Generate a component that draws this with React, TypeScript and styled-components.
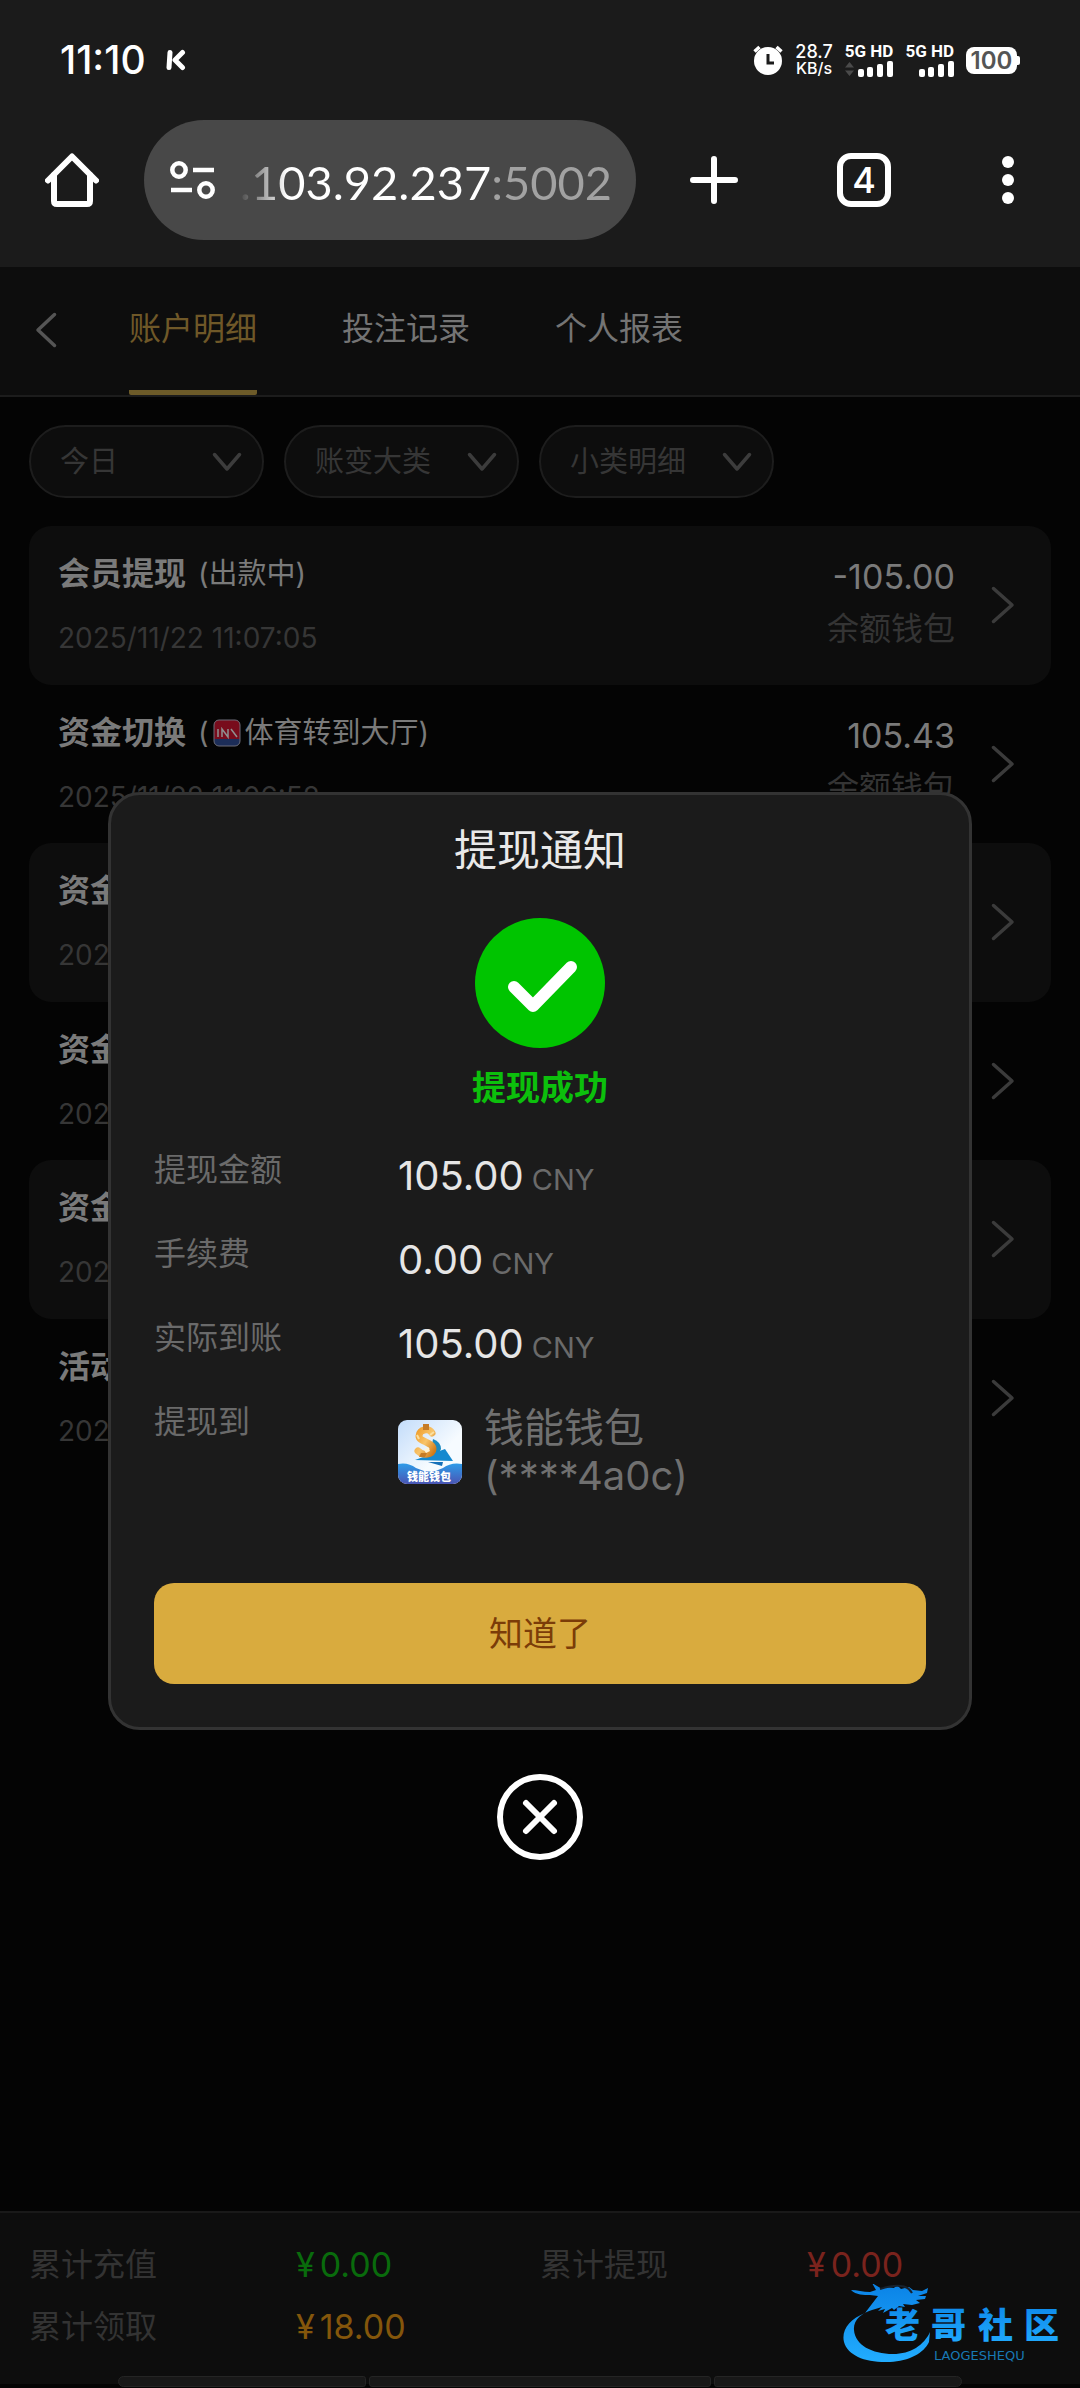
import React from "react";
import styled, { createGlobalStyle } from "styled-components";

const GlobalStyle = createGlobalStyle`
  *, *::before, *::after { box-sizing: border-box; }
  body {
    margin: 0;
    background: #040404;
    font-family: Inter, "Noto Sans CJK SC", sans-serif;
  }
  button, input, select { font: inherit; color: inherit; border: 0; padding: 0; margin: 0; background: none; outline: none; }
  ul, dl, dd, h2, p { margin: 0; padding: 0; }
  ul { list-style: none; }
  svg { display: block; flex: none; }
`;

const Screen = styled.div`
  display: flex;
  flex-direction: column;
  min-height: 100vh;
`;

/* ---------- browser chrome ---------- */

const Chrome = styled.header`
  background: #1b1b1b;
  padding-bottom: 27px;
`;

const StatusBar = styled.div`
  display: flex;
  align-items: center;
  justify-content: space-between;
  height: 120px;
  padding: 0 60px;
  color: #fff;
`;

const StatusGroup = styled.div<{ $gap: number }>`
  display: flex;
  align-items: center;
  gap: ${(p) => p.$gap}px;
`;

const Clock = styled.span`
  font-size: 39px;
  font-weight: 500;
  line-height: 40px;
`;

const NetSpeed = styled.div`
  display: flex;
  flex-direction: column;
  align-items: center;
  font-size: 18px;
  font-weight: 500;
  line-height: 16px;
  small { font-size: 16px; }
`;

const Sim = styled.div`
  display: flex;
  flex-direction: column;
  align-items: flex-end;
  gap: 2px;
  font: 700 17px/16px Roboto, sans-serif;
`;

const Battery = styled.div`
  display: flex;
  align-items: center;
`;

const BatteryBody = styled.span`
  width: 51px;
  border-radius: 8px;
  background: #fff;
  color: #555;
  font-size: 24px;
  font-weight: 600;
  line-height: 27px;
  text-align: center;
`;

const BatteryNub = styled.span`
  width: 3px;
  height: 9px;
  border-radius: 0 2px 2px 0;
  background: #fff;
`;

const Toolbar = styled.div`
  display: flex;
  align-items: center;
  padding-left: 45px;
  color: #fff;
`;

const AddressBar = styled.label`
  display: flex;
  flex: 1;
  min-width: 0;
  align-items: center;
  height: 120px;
  margin-left: 45px;
  padding: 0 24px 0 26px;
  border-radius: 60px;
  background: #484848;
`;

const Address = styled.input`
  flex: 1;
  min-width: 0;
  height: 64px;
  padding-top: 4px;
  font-family: Lato, sans-serif;
  font-size: 47px;
  line-height: 60px;
  text-align: right;
  color: transparent;
  background: linear-gradient(90deg, transparent 24px, #fff 72px, #fff 276px, #a2a2a2 276px);
  background-clip: text;
  -webkit-background-clip: text;
`;

const ToolButton = styled.button<{ $width: number }>`
  display: flex;
  align-items: center;
  justify-content: center;
  width: ${(p) => p.$width}px;
  height: 120px;
`;

const TabCount = styled.span`
  width: 54px;
  border: 6px solid #fff;
  border-radius: 14px;
  font-size: 36px;
  font-weight: 500;
  line-height: 42px;
  text-align: center;
`;

/* ---------- page behind the dialog ---------- */

const Page = styled.main`
  position: relative;
  display: flex;
  flex: 1;
  flex-direction: column;
`;

const TabBar = styled.nav`
  display: flex;
  height: 130px;
  padding-left: 29px;
  border-bottom: 2px solid #1c1c1c;
  background: #0d0d0d;
`;

const BackButton = styled.button`
  display: flex;
  align-items: center;
  width: 100px;
  padding: 0 6px 2px;
  color: #555;
`;

const Tabs = styled.div`
  display: flex;
  gap: 85px;
`;

const Tab = styled.a<{ $active?: boolean }>`
  padding-top: 38px;
  border-bottom: 5px solid ${(p) => (p.$active ? "#6d5b29" : "transparent")};
  border-radius: 2px;
  color: ${(p) => (p.$active ? "#6f5828" : "#747474")};
  font-size: 32px;
  line-height: 48px;
  text-decoration: none;
`;

const Filters = styled.div`
  display: flex;
  gap: 20px;
  padding: 28px 29px;
`;

const Filter = styled.label`
  display: flex;
  align-items: center;
  width: 235px;
  height: 73px;
  padding-right: 20px;
  border: 2px solid #1d1d1d;
  border-radius: 37px;
  background: #0d0d0d;
  color: #3c3c3c;
`;

const FilterSelect = styled.select`
  flex: 1;
  min-width: 0;
  height: 48px;
  padding-left: 29px;
  appearance: none;
  color: #363636;
  font-size: 29px;
  line-height: 44px;
`;

const Records = styled.ul`
  padding: 0 29px;
`;

const RecordItem = styled.li`
  border-radius: 22px;
  &:nth-child(odd) {
    padding-bottom: 1px;
    background: #0d0d0d;
  }
`;

const RecordButton = styled.button`
  display: flex;
  align-items: center;
  width: 100%;
  height: 158px;
  padding: 0 36px 0 29px;
  color: #3b3b3b;
  text-align: left;
`;

const RecordMain = styled.span`
  display: flex;
  flex: 1;
  flex-direction: column;
  gap: 16px;
  padding-top: 2px;
`;

const RecordTitle = styled.span`
  display: flex;
  align-items: center;
  gap: 12px;
  color: #7a7a7a;
  font-size: 32px;
  line-height: 48px;
`;

const RecordNote = styled.span`
  display: flex;
  align-items: center;
  font-size: 29px;
  svg { margin: 0 4px; }
`;

const RecordDate = styled.span`
  color: #363636;
  font-size: 28px;
  line-height: 48px;
`;

const RecordSide = styled.span`
  display: flex;
  flex-direction: column;
  gap: 4px;
  margin-right: 36px;
  padding-bottom: 5px;
  color: #343434;
  font-size: 32px;
  line-height: 48px;
  text-align: right;
`;

const RecordAmount = styled.span`
  color: #7a7a7a;
  font-size: 34px;
`;

const Summary = styled.footer`
  margin-top: auto;
  padding-top: 28px;
  border-top: 2px solid #191919;
  background: linear-gradient(#0d0d0d, #0d0d0d) 0 0 / 100% calc(100% - 4px) no-repeat;
`;

const Totals = styled.dl`
  display: grid;
  grid-template-columns: 1fr 1fr;
  row-gap: 14px;
  padding: 0 29px;
`;

const Total = styled.div`
  display: flex;
  font-size: 32px;
  line-height: 48px;
`;

const TotalLabel = styled.dt`
  width: 267px;
  color: #333;
`;

const TotalValue = styled.dd<{ $color: string }>`
  display: flex;
  gap: 5px;
  color: ${(p) => p.$color};
  font-size: 34px;
`;

const Segments = styled.div`
  display: flex;
  gap: 3px;
  margin: 25px 118px 1px;
`;

const Segment = styled.span<{ $grow: number }>`
  flex: ${(p) => p.$grow};
  height: 11px;
  border: 1px solid #242424;
  border-radius: 3px;
  background: #181818;
  &:first-child { border-radius: 6px 3px 3px 6px; }
  &:last-child { border-radius: 3px 6px 6px 3px; }
`;

const Watermark = styled.svg`
  position: absolute;
  right: 14px;
  bottom: 20px;
`;

/* ---------- dialog ---------- */

const DialogLayer = styled.div`
  position: absolute;
  inset: 0;
  display: flex;
  flex-direction: column;
  align-items: center;
  justify-content: center;
  gap: 44px;
  padding-bottom: 3px;
`;

const Dialog = styled.section`
  display: flex;
  flex-direction: column;
  align-items: center;
  width: 80%;
  padding: 25px 43px 43px;
  border: 3px solid #333;
  border-radius: 32px;
  background: #1b1b1b;
`;

const DialogTitle = styled.h2`
  margin-bottom: 38px;
  color: #e9e9e9;
  font-size: 43px;
  font-weight: 400;
  line-height: 60px;
`;

const Success = styled.p`
  margin: 20px 0 38px;
  color: #0cc00c;
  font-size: 34px;
  font-weight: 700;
  line-height: 40px;
`;

const Details = styled.dl`
  display: flex;
  flex-direction: column;
  gap: 30px;
  align-self: stretch;
`;

const Detail = styled.div`
  display: flex;
`;

const DetailLabel = styled.dt`
  width: 244px;
  color: #6a6a6a;
  font-size: 32px;
  line-height: 48px;
`;

const DetailValue = styled.dd`
  display: flex;
  align-items: center;
  padding-top: 6px;
  color: #e6e6e6;
  font-size: 40px;
  line-height: 48px;
`;

const Amount = styled.span`
  small {
    margin-left: 8px;
    color: #6a6a6a;
    font-size: 29px;
    line-height: 29px;
  }
`;

const WalletName = styled.span`
  margin-left: 22px;
  color: #707070;
`;

const ConfirmButton = styled.button`
  align-self: stretch;
  height: 101px;
  margin-top: 83px;
  border-radius: 20px;
  background: #d9ab3e;
  color: #7b3c08;
  font-size: 34px;
  line-height: 48px;
`;

const CloseButton = styled.button`
  display: block;
  border-radius: 50%;
`;

/* ---------- drawings ---------- */

const KIcon = () => (
  <svg width="20" height="22" viewBox="0 0 20 22" fill="none" stroke="#fff" strokeWidth="5" strokeLinecap="round" strokeLinejoin="round">
    <path d="M4 3.500 3 18.500M16.500 3.500 9 11l7.500 7.500" />
  </svg>
);

const AlarmIcon = () => (
  <svg width="30" height="30" viewBox="0 0 30 30" fill="none">
    <circle cx="15" cy="16" r="14" fill="#fff" />
    <path d="M1.500 6.500 6.500 2M28.500 6.500 23.500 2" stroke="#fff" strokeWidth="3.500" />
    <path d="M15 9v9h6" stroke="#1b1b1b" strokeWidth="3" />
  </svg>
);

const SignalIcon = ({ arrows }: { arrows?: boolean }) => (
  <svg width="48" height="16" viewBox="0 0 48 16" fill="#fff">
    {arrows && <path d="M0 6.500 4.500 1 9 6.500zM0 9.500h9L4.500 15z" fill="#4a4a4a" />}
    <rect x="13" y="8" width="6" height="8" rx="2" />
    <rect x="22" y="6" width="6" height="10" rx="2" />
    <rect x="32" y="3" width="6" height="13" rx="2" />
    <rect x="42" y="0" width="6" height="16" rx="2" />
  </svg>
);

const HomeIcon = () => (
  <svg width="54" height="54" viewBox="0 0 54 54" fill="none" stroke="#fff" strokeWidth="6" strokeLinecap="round" strokeLinejoin="round">
    <path d="M3 27.500 27 3.500 51 27.500" />
    <path d="M9 22v26q0 3 3 3h30q3 0 3-3V22" />
  </svg>
);

const SiteIcon = () => (
  <svg width="45" height="40" viewBox="0 0 45 40" fill="none" stroke="#fff" strokeWidth="4.500">
    <circle cx="9" cy="10" r="6.700" />
    <path d="M23 10h21M1 30h21" />
    <circle cx="36" cy="30" r="6.700" />
  </svg>
);

const PlusIcon = () => (
  <svg width="48" height="48" viewBox="0 0 48 48" stroke="#fff" strokeWidth="6" strokeLinecap="round">
    <path d="M24 3v42M3 24h42" />
  </svg>
);

const MenuIcon = () => (
  <svg width="12" height="48" viewBox="0 0 12 48" fill="#fff">
    <circle cx="6" cy="6" r="6" />
    <circle cx="6" cy="24" r="6" />
    <circle cx="6" cy="42" r="6" />
  </svg>
);

const Chevron = ({ dir }: { dir: "left" | "right" | "down" }) => {
  const box = { left: [22, 36], right: [24, 38], down: [30, 20] }[dir];
  const path = {
    left: "M19.500 2.500 3 18l16.500 15.500",
    right: "M2.500 2.500 21 19 2.500 35.500",
    down: "M2.500 2.500 15 17 27.500 2.500",
  }[dir];
  return (
    <svg width={box[0]} height={box[1]} viewBox={`0 0 ${box[0]} ${box[1]}`} fill="none" stroke="currentColor" strokeWidth="3.500" strokeLinecap="round" strokeLinejoin="round">
      <path d={path} />
    </svg>
  );
};

const SportIcon = () => (
  <svg width="28" height="28" viewBox="0 0 28 28">
    <rect x="1" y="1" width="26" height="26" rx="5" fill="#1c2d58" />
    <path d="M1 20V6q0-5 5-5h16q5 0 5 5v14z" fill="#780c1c" />
    <rect x="1" y="1" width="26" height="26" rx="5" fill="none" stroke="#6d6d78" strokeWidth="1" />
    <path d="M5 10v8M9 18v-8l6 8v-8M18 10l6 8" fill="none" stroke="#909090" strokeWidth="1.500" />
  </svg>
);

const CheckIcon = () => (
  <svg width="130" height="130" viewBox="0 0 130 130" fill="none">
    <circle cx="65" cy="65" r="65" fill="#00c400" />
    <path d="M39 69 58 88 96 49" stroke="#fff" strokeWidth="12" strokeLinecap="round" strokeLinejoin="round" />
  </svg>
);

const CloseIcon = () => (
  <svg width="86" height="86" viewBox="0 0 86 86" fill="none" stroke="#fff" strokeWidth="6" strokeLinecap="round">
    <circle cx="43" cy="43" r="40" />
    <path d="M29 29 57 57M57 29 29 57" />
  </svg>
);

const WalletIcon = () => (
  <svg width="64" height="64" viewBox="0 0 64 64">
    <defs>
      <linearGradient id="sky" x1="0" y1="0" x2="1" y2="1">
        <stop offset="0" stopColor="#c3dcfa" />
        <stop offset="0.600" stopColor="#f6fbff" />
      </linearGradient>
      <linearGradient id="sea" x1="0" y1="0" x2="0" y2="1">
        <stop offset="0" stopColor="#2d9be8" />
        <stop offset="1" stopColor="#4a55b4" />
      </linearGradient>
      <linearGradient id="gold" x1="0" y1="0" x2="1" y2="1">
        <stop offset="0" stopColor="#f0a030" />
        <stop offset="0.500" stopColor="#f8c46a" />
        <stop offset="1" stopColor="#d07a18" />
      </linearGradient>
      <clipPath id="tile"><rect width="64" height="64" rx="9" /></clipPath>
    </defs>
    <g clipPath="url(#tile)">
      <rect width="64" height="64" fill="url(#sky)" />
      <path d="M35 19q8 3 8 10l-3 6-7-4z" fill="#1b8ac0" />
      <path d="M17 40 47 29l8 12z" fill="#1689cf" />
      <path d="M30 42h15l-1 4z" fill="#1670b8" />
      <path d="M34 13c-3-5-13-4-13 3 0 6 14 6 14 13 0 6-10 7-15 2" fill="none" stroke="url(#gold)" strokeWidth="7" strokeLinecap="round" />
      <path d="M25 4h6v6h-6zM23 33h6l-2 4h-6z" fill="#c67b26" />
      <path d="M26 30l4-3 2 4-4 2z" fill="#fff3d6" />
      <path d="M32 15l4-3M21 19l-2-4" stroke="#fbe0a0" strokeWidth="2" />
      <path d="M0 44q10-2 18 4 14 7 27 0 8-6 19-4v20H0z" fill="url(#sea)" />
      <text x="31" y="61" fill="#fff" fontSize="11" fontWeight="900" textAnchor="middle">钱能钱包</text>
    </g>
  </svg>
);

const DragonLogo = () => (
  <Watermark width="226" height="84" viewBox="0 0 226 84" aria-label="老哥社区">
    <defs>
      <linearGradient id="blue" x1="0" y1="0" x2="0" y2="1">
        <stop offset="0" stopColor="#0a82e6" />
        <stop offset="1" stopColor="#22adff" />
      </linearGradient>
    </defs>
    <path
      fill="url(#blue)"
      d="M25 29C10 35 1 46 4 58c4 14 22 21 46 20 19-1 34-9 39-20l1-10c-6 13-19 22-37 22-21 0-38-9-39-24-1-10 8-17 18-20l10-3-4 4 7-2-2 4 9-5 2 2 5-4 6 1-2-3 9 1 8-2-4-3 9-1 1-3-8 0 9-3 1-5-6 3-9-1-4-3-8 2-4-4-3 3-9-1-3 2-10-6 4 7-6 2c-7 0-13-2-19-2 5 5 13 5 19 5l8 1z"
    />
    <path d="M40 5q26-8 32 4" fill="none" stroke="#17222e" strokeWidth="2" />
    <g fill="url(#blue)" fontFamily='"Noto Sans CJK SC", sans-serif' fontWeight="900" fontSize="35">
      <text x="45 91 138 184" y="54">老哥社区</text>
    </g>
    <text x="94" y="76" fill="#1878b4" fontFamily='"DejaVu Sans", sans-serif' fontSize="13">LAOGESHEQU</text>
  </Watermark>
);

/* ---------- data ---------- */

type RecordEntry = {
  title: string;
  date: string;
  note?: React.ReactNode;
  amount?: string;
  wallet?: string;
};

const records: RecordEntry[] = [
  { title: "会员提现", note: "(出款中)", date: "2025/11/22 11:07:05", amount: "-105.00", wallet: "余额钱包" },
  { title: "资金切换", note: <>(<SportIcon />体育转到大厅)</>, date: "2025/11/22 11:06:52", amount: "105.43", wallet: "余额钱包" },
  { title: "资金", date: "2025" },
  { title: "资金", date: "2025" },
  { title: "资金", date: "2025" },
  { title: "活动", date: "2025" },
];

const totals = [
  { label: "累计充值", value: "0.00", color: "#096b0c" },
  { label: "累计提现", value: "0.00", color: "#7a231d" },
  { label: "累计领取", value: "18.00", color: "#84560b" },
];

const amounts = [
  { label: "提现金额", value: "105.00" },
  { label: "手续费", value: "0.00" },
  { label: "实际到账", value: "105.00" },
];

export default function App() {
  return (
    <Screen>
      <GlobalStyle />
      <Chrome>
        <StatusBar>
          <StatusGroup $gap={20}>
            <Clock>11:10</Clock>
            <KIcon />
          </StatusGroup>
          <StatusGroup $gap={12}>
            <AlarmIcon />
            <NetSpeed>28.7<small>KB/s</small></NetSpeed>
            <Sim>5G HD<SignalIcon arrows /></Sim>
            <Sim>5G HD<SignalIcon /></Sim>
            <Battery>
              <BatteryBody>100</BatteryBody>
              <BatteryNub />
            </Battery>
          </StatusGroup>
        </StatusBar>
        <Toolbar>
          <button aria-label="主页"><HomeIcon /></button>
          <AddressBar>
            <SiteIcon />
            <Address aria-label="网址" defaultValue=".103.92.237:5002" />
          </AddressBar>
          <ToolButton $width={156} aria-label="新标签页"><PlusIcon /></ToolButton>
          <ToolButton $width={144} aria-label="标签页"><TabCount>4</TabCount></ToolButton>
          <ToolButton $width={144} aria-label="菜单"><MenuIcon /></ToolButton>
        </Toolbar>
      </Chrome>

      <Page>
        <TabBar>
          <BackButton aria-label="返回"><Chevron dir="left" /></BackButton>
          <Tabs>
            <Tab href="#details" $active>账户明细</Tab>
            <Tab href="#bets">投注记录</Tab>
            <Tab href="#report">个人报表</Tab>
          </Tabs>
        </TabBar>

        <Filters>
          {["今日", "账变大类", "小类明细"].map((name) => (
            <Filter key={name}>
              <FilterSelect aria-label={name}><option>{name}</option></FilterSelect>
              <Chevron dir="down" />
            </Filter>
          ))}
        </Filters>

        <Records>
          {records.map((r, i) => (
            <RecordItem key={i}>
              <RecordButton>
                <RecordMain>
                  <RecordTitle>
                    <b>{r.title}</b>
                    {r.note && <RecordNote>{r.note}</RecordNote>}
                  </RecordTitle>
                  <RecordDate>{r.date}</RecordDate>
                </RecordMain>
                <RecordSide>
                  <RecordAmount>{r.amount}</RecordAmount>
                  {r.wallet}
                </RecordSide>
                <Chevron dir="right" />
              </RecordButton>
            </RecordItem>
          ))}
        </Records>

        <Summary>
          <Totals>
            {totals.map((t) => (
              <Total key={t.label}>
                <TotalLabel>{t.label}</TotalLabel>
                <TotalValue $color={t.color}><span>¥</span><span>{t.value}</span></TotalValue>
              </Total>
            ))}
          </Totals>
          <Segments>
            <Segment $grow={248} />
            <Segment $grow={342} />
            <Segment $grow={248} />
          </Segments>
        </Summary>

        <DialogLayer>
          <Dialog role="dialog" aria-labelledby="dialog-title">
            <DialogTitle id="dialog-title">提现通知</DialogTitle>
            <CheckIcon />
            <Success>提现成功</Success>
            <Details>
              {amounts.map((a) => (
                <Detail key={a.label}>
                  <DetailLabel>{a.label}</DetailLabel>
                  <DetailValue>
                    <Amount>{a.value}<small>CNY</small></Amount>
                  </DetailValue>
                </Detail>
              ))}
              <Detail>
                <DetailLabel>提现到</DetailLabel>
                <DetailValue>
                  <WalletIcon />
                  <WalletName>钱能钱包<br />(****4a0c)</WalletName>
                </DetailValue>
              </Detail>
            </Details>
            <ConfirmButton>知道了</ConfirmButton>
          </Dialog>
          <CloseButton aria-label="关闭"><CloseIcon /></CloseButton>
        </DialogLayer>

        <DragonLogo />
      </Page>
    </Screen>
  );
}
